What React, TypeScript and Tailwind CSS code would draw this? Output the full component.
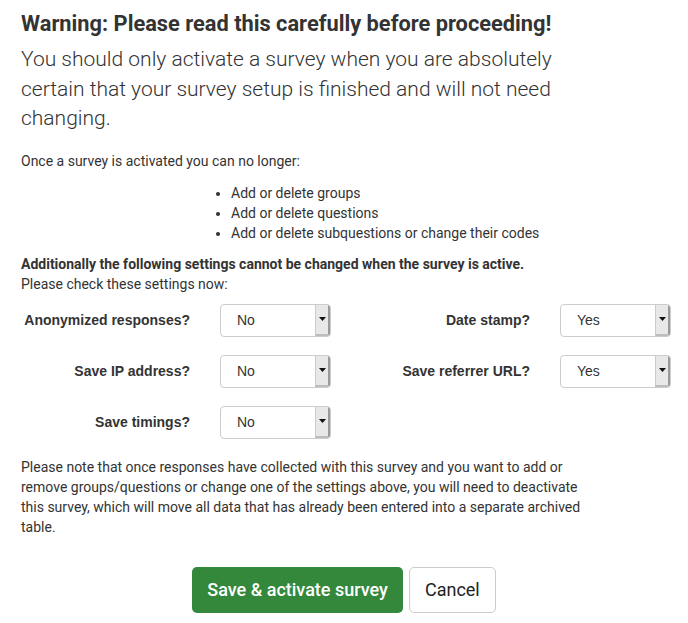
import React from "react";

const Select = ({ value }: { value: string }) => (
  <div className="flex h-[33px] w-[111px] overflow-hidden rounded-[4px] border border-[#cccccc] bg-white">
    <div className="flex flex-1 items-center pl-[16px] text-[14px] text-[#333]" style={{ fontFamily: '"Liberation Sans", Arial, sans-serif' }}>
      {value}
    </div>
    <div className="flex w-[15px] items-center justify-center border-l border-[#cccccc] border-r-2 border-r-[#9a9a9a] border-b-2 border-b-[#bdbdbd] bg-[#e8e8e8]">
      <svg width="7" height="4" viewBox="0 0 7 4">
        <path d="M0 0 L7 0 L3.5 4 Z" fill="#111" />
      </svg>
    </div>
  </div>
);

const Field = ({ label, value }: { label: string; value: string }) => (
  <div className="flex items-center">
    <div
      className="w-[169px] shrink-0 text-right text-[14px] font-bold text-[#333]"
      style={{ fontFamily: '"Liberation Sans", Arial, sans-serif' }}
    >
      {label}
    </div>
    <div className="ml-[30px] shrink-0">
      <Select value={value} />
    </div>
  </div>
);

export default function App() {
  return (
    <div
      className="min-h-[623px] w-[688px] bg-white px-[21px] text-[#333]"
      style={{ fontFamily: 'Roboto, "Noto Sans", sans-serif' }}
    >
      <h2 className="pt-[9px] text-[21.8px] font-bold leading-[30px] text-[#333]">
        Warning: Please read this carefully before proceeding!
      </h2>
      <p className="mt-[6px] w-[545px] text-[21px] font-light leading-[29.5px] text-[#333]">
        You should only activate a survey when you are absolutely certain that your survey setup is finished and will not need changing.
      </p>
      <p className="mt-[17px] text-[14px] leading-[20px]">Once a survey is activated you can no longer:</p>
      <ul className="mt-[12px] list-disc pl-[210px] text-[14px] leading-[20px]">
        <li>Add or delete groups</li>
        <li>Add or delete questions</li>
        <li>Add or delete subquestions or change their codes</li>
      </ul>
      <p className="mt-[11px] text-[14px] font-bold leading-[20px]">
        Additionally the following settings cannot be changed when the survey is active.
      </p>
      <p className="text-[14px] leading-[20px]">Please check these settings now:</p>
      <div className="mt-[10px] flex w-[700px]">
        <div className="flex w-[340px] shrink-0 flex-col gap-[18px]">
          <Field label="Anonymized responses?" value="No" />
          <Field label="Save IP address?" value="No" />
          <Field label="Save timings?" value="No" />
        </div>
        <div className="flex shrink-0 flex-col gap-[18px]">
          <Field label="Date stamp?" value="Yes" />
          <Field label="Save referrer URL?" value="Yes" />
        </div>
      </div>
      <p className="mt-[18px] w-[570px] text-[14px] leading-[20px]">
        Please note that once responses have collected with this survey and you want to add or remove groups/questions or change one of the settings above, you will need to deactivate this survey, which will move all data that has already been entered into a separate archived table.
      </p>
      <div className="mt-[30px] flex justify-center gap-[6px]">
        <button className="h-[46px] rounded-[5px] bg-[#33883b] px-[15px] text-[18px] font-medium text-white">
          Save &amp; activate survey
        </button>
        <button className="h-[46px] rounded-[5px] border border-[#cccccc] bg-white px-[15px] text-[18px] font-normal text-[#222]">
          Cancel
        </button>
      </div>
    </div>
  );
}
